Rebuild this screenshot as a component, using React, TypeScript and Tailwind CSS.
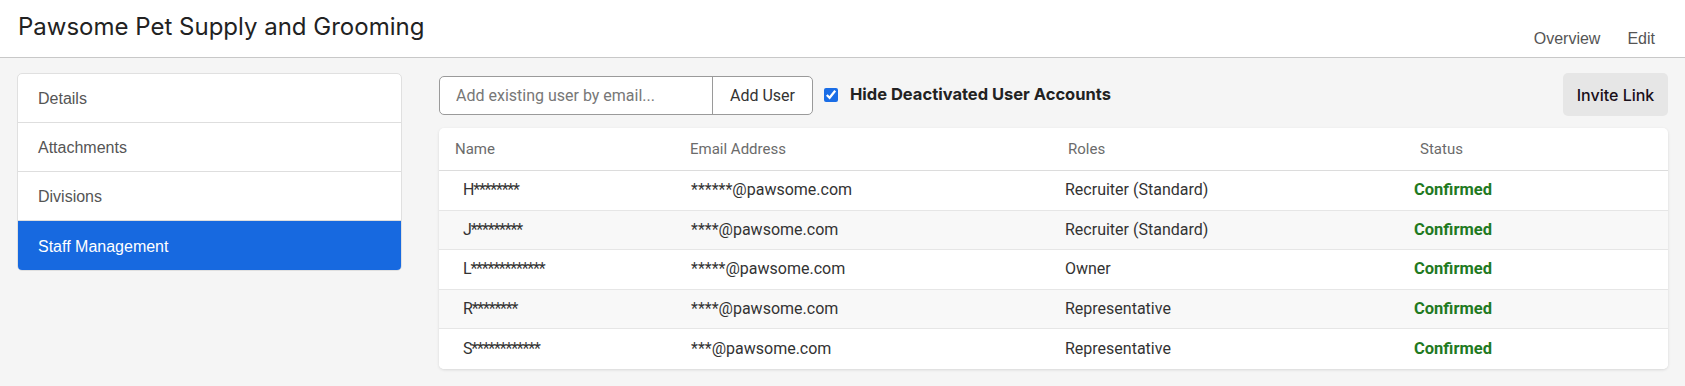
const staff = [
  { name: "H********", email: "******@pawsome.com", role: "Recruiter (Standard)" },
  { name: "J*********", email: "****@pawsome.com", role: "Recruiter (Standard)" },
  { name: "L*************", email: "*****@pawsome.com", role: "Owner" },
  { name: "R********", email: "****@pawsome.com", role: "Representative" },
  { name: "S************", email: "***@pawsome.com", role: "Representative" },
];

const tabs = ["Details", "Attachments", "Divisions", "Staff Management"];

export default function App() {
  const active = "Staff Management";

  return (
    <div className="min-h-screen bg-[#f5f5f5] font-['Roboto',sans-serif]">
      {/* header */}
      <header className="flex h-[58px] items-start justify-between border-b border-[#c8c8c8] bg-white pl-[18px] pr-[30px]">
        <h1 className="mt-[12px] font-['Inter',sans-serif] text-[24px] leading-[30px] text-[#222]">
          Pawsome Pet Supply and Grooming
        </h1>
        <nav className="mt-[29px] flex gap-[27px] font-['Liberation_Sans',Arial,sans-serif] text-[16px] leading-[20px] text-[#555]">
          <a>Overview</a>
          <a>Edit</a>
        </nav>
      </header>

      <div className="flex gap-[37px] px-[17px] pt-[15px] pb-[16px]">
        {/* sidebar */}
        <aside className="w-[385px] shrink-0 self-start overflow-hidden rounded-[5px] border border-[#e0e0e0] bg-white font-['Liberation_Sans',Arial,sans-serif]">
          {tabs.map((t, i) => (
            <div
              key={t}
              className={
                (t === active ? "bg-[#1769e0] text-white" : "text-[#555]") +
                (i < tabs.length - 1 ? " border-b border-[#dedede]" : "") +
                " flex h-[49px] items-center px-[20px] pt-[2px] text-[16px]"
              }
            >
              {t}
            </div>
          ))}
        </aside>

        {/* main */}
        <main className="flex-1">
          <div className="flex items-start justify-between">
            <div className="mt-[3px] flex items-center">
              <div className="flex h-[39px] overflow-hidden rounded-[5px] border border-[#9a9a9a] bg-white">
                <input
                  placeholder="Add existing user by email..."
                  className="w-[273px] border-r border-[#9a9a9a] px-[16px] text-[16px] text-[#333] outline-none placeholder:text-[#777]"
                />
                <button className="w-[99px] text-[16px] text-[#333]">Add User</button>
              </div>
              <label className="ml-[11px] mb-[2px] flex items-center gap-[12px]">
                <input type="checkbox" defaultChecked className="h-[14px] w-[14px] accent-[#1a6de6]" />
                <span className="font-['Inter',sans-serif] text-[16.5px] font-bold text-[#222]">
                  Hide Deactivated User Accounts
                </span>
              </label>
            </div>
            <button className="h-[43px] w-[105px] rounded-[5px] bg-[#e6e6e6] font-['Inter',sans-serif] text-[16px] font-medium text-[#1a0f1a]">
              Invite Link
            </button>
          </div>

          {/* table */}
          <div className="mt-[12px] overflow-hidden rounded-[5px] bg-white shadow-[0_1px_3px_rgba(0,0,0,0.12)]">
            <div className="grid h-[43px] grid-cols-[235px_373px_352px_1fr] items-center border-b border-[#dcdcdc] text-[15px] text-[#6b6b6b] shadow-[0_1px_2px_rgba(0,0,0,0.06)]">
              <div className="pl-[16px]">Name</div>
              <div className="pl-[16px]">Email Address</div>
              <div className="pl-[21px]">Roles</div>
              <div className="pl-[21px]">Status</div>
            </div>
            {staff.map((s, i) => (
              <div
                key={s.name}
                className={
                  (i % 2 === 1 ? "bg-[#f8f8f8]" : "bg-white") +
                  (i < staff.length - 1 ? " border-b border-[#e6e6e6]" : "") +
                  " grid h-[39.6px] grid-cols-[235px_373px_352px_1fr] items-center text-[16px] text-[#333]"
                }
              >
                <div className="pl-[24px] tracking-[-1.2px]">{s.name}</div>
                <div className="pl-[17px]">{s.email}</div>
                <div className="pl-[18px]">{s.role}</div>
                <div className="pl-[15px] text-[16.5px] font-bold text-[#1f7a1f]">Confirmed</div>
              </div>
            ))}
          </div>
        </main>
      </div>
    </div>
  );
}
